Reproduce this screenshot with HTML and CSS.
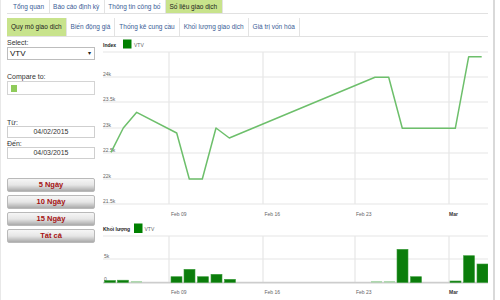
FILE: index.html
```html
<!DOCTYPE html>
<html lang="vi">
<head>
  <meta charset="UTF-8" />
  <title>Số liệu giao dịch - VTV</title>
  <meta name="viewport" content="width=device-width, initial-scale=1.0" />
  <link rel="stylesheet" href="styles.css">
</head>
<body>
  <div class="frame">
    <ul class="tabs tabs-top">
      <li>Tổng quan</li>
      <li>Báo cáo định kỳ</li>
      <li>Thông tin công bố</li>
      <li class="active">Số liệu giao dịch</li>
    </ul>
    <ul class="tabs tabs-sub">
      <li class="active">Quy mô giao dịch</li>
      <li>Biến động giá</li>
      <li>Thống kê cung cầu</li>
      <li>Khối lượng giao dịch</li>
      <li>Giá trị vốn hóa</li>
    </ul>

    <div class="content">
      <div class="filters">
        <label class="lbl-select">Select:</label>
        <div class="select">VTV<span class="caret">▾</span></div>

        <label class="lbl-compare">Compare to:</label>
        <div class="compare"><span class="swatch"></span></div>

        <label class="lbl-from">Từ:</label>
        <div class="date">04/02/2015</div>
        <label class="lbl-to">Đến:</label>
        <div class="date">04/03/2015</div>

        <div class="ranges">
          <button>5 Ngày</button>
          <button>10 Ngày</button>
          <button>15 Ngày</button>
          <button>Tất cả</button>
        </div>
      </div>

      <svg class="chart" width="388" height="262" viewBox="0 0 388 262">
        <g transform="translate(-100 -38)">
          <!-- price chart -->
          <text class="legend" x="103" y="47.5">Index</text>
          <rect x="123" y="40.5" width="8.5" height="9" fill="#008000" />
          <text class="tick" x="134" y="47.5">VTV</text>

          <g class="grid">
            <line x1="103" y1="53" x2="488" y2="53" />
            <line x1="103" y1="78" x2="488" y2="78" />
            <line x1="103" y1="103" x2="488" y2="103" />
            <line x1="103" y1="129" x2="488" y2="129" />
            <line x1="103" y1="154" x2="488" y2="154" />
            <line x1="103" y1="180" x2="488" y2="180" />
            <line x1="103" y1="205" x2="488" y2="205" />
            <line x1="169" y1="53" x2="169" y2="205" />
            <line x1="263" y1="53" x2="263" y2="205" />
            <line x1="355" y1="53" x2="355" y2="205" />
            <line x1="449" y1="53" x2="449" y2="205" />
          </g>

          <text class="tick" x="103" y="76.5">24k</text>
          <text class="tick" x="103" y="101.5">23.5k</text>
          <text class="tick" x="103" y="127.5">23k</text>
          <text class="tick" x="103" y="152.5">22.5k</text>
          <text class="tick" x="103" y="178.5">22k</text>
          <text class="tick" x="103" y="203.5">21.5k</text>

          <text class="tick" x="171" y="216.5">Feb 09</text>
          <text class="tick" x="264.5" y="216.5">Feb 16</text>
          <text class="tick" x="356" y="216.5">Feb 23</text>
          <text class="tick month" x="449" y="216.5">Mar</text>

          <polyline class="price" points="111,153.3 123.3,129 136.7,113.3 176.7,134 189.3,180 202.3,180 216,129 229.3,139 375,78.3 388.7,78.3 402.3,129.3 455.3,129.3 468.7,57.7 481.7,57.7" />

          <!-- volume chart -->
          <text class="legend" x="103" y="231.5">Khối lượng</text>
          <rect x="134" y="224.5" width="8.5" height="9.5" fill="#008000" />
          <text class="tick" x="144.5" y="231.5">VTV</text>

          <g class="grid">
            <line x1="103" y1="237" x2="488" y2="237" />
            <line x1="103" y1="260" x2="488" y2="260" />
            <line x1="169" y1="237" x2="169" y2="283" />
            <line x1="263" y1="237" x2="263" y2="283" />
            <line x1="355" y1="237" x2="355" y2="283" />
            <line x1="449" y1="237" x2="449" y2="283" />
          </g>
          <line class="axis" x1="103" y1="283.6" x2="488" y2="283.6" />

          <text class="tick" x="104" y="258.5">5k</text>
          <text class="tick" x="104" y="281.5">0</text>

          <g class="bars">
            <rect x="104.5" y="281.5" width="11" height="2" />
            <rect x="117.5" y="281.2" width="11" height="2.3" />
            <rect class="low" x="131" y="282.2" width="11" height="1.3" />
            <rect x="171" y="277.7" width="11" height="5.8" />
            <rect x="184" y="270.3" width="11" height="13.2" />
            <rect x="197.5" y="277.7" width="11" height="5.8" />
            <rect x="211" y="275.3" width="11" height="8.2" />
            <rect x="224.5" y="280.3" width="11" height="3.2" />
            <rect class="low" x="371" y="282.2" width="11" height="1.3" />
            <rect class="low" x="384" y="282.2" width="11" height="1.3" />
            <rect x="397" y="250.3" width="11" height="33.2" />
            <rect x="410.5" y="277.7" width="11" height="5.8" />
            <rect x="450" y="282" width="11" height="1.5" />
            <rect x="463.5" y="256.7" width="11" height="26.8" />
            <rect x="477" y="265" width="11" height="18.5" />
          </g>

          <text class="tick" x="171" y="295">Feb 09</text>
          <text class="tick" x="264.5" y="295">Feb 16</text>
          <text class="tick" x="356" y="295">Feb 23</text>
          <text class="tick month" x="449" y="295">Mar</text>
        </g>
      </svg>
    </div>
  </div>
</body>
</html>
```

FILE: styles.css
```css
body {
  margin: 0;
  font-family: "Liberation Sans", Arial, sans-serif;
  background: #ffffff;
}
.frame {
  width: 495px;
  height: 300px;
  box-sizing: border-box;
  border-left: 1px solid #e8e8e8;
  border-right: 2px solid #d9d9d9;
  padding: 0 5px 0 6px;
  overflow: hidden;
}
.tabs {
  list-style: none;
  margin: 0;
  padding: 0;
  display: flex;
}
.tabs li {
  color: #3a5c96;
  white-space: nowrap;
  border-right: 1px solid #e3e3e3;
}
.tabs-top {
  height: 13px;
  padding-left: 3px;
  border-bottom: 1.5px solid #e1e1e1;
}
.tabs-top li {
  font-size: 6.5px;
  line-height: 13px;
  padding: 0 5px 0 3px;
}
.tabs-sub {
  margin-top: 3.5px;
  height: 18.5px;
  border-bottom: 1.5px solid #e1e1e1;
}
.tabs-sub li {
  font-size: 6.5px;
  line-height: 18.5px;
  padding: 0 4px;
}
.tabs li.active {
  background: #c8e38c;
  color: #1b1b1b;
}

.content {
  display: flex;
  gap: 5px;
}
.filters {
  width: 88px;
  flex: none;
}
label {
  display: block;
  font-size: 7px;
  line-height: 7px;
  color: #333;
}
.lbl-select {
  margin-top: 2px;
}
.select {
  position: relative;
  margin-top: 0.5px;
  height: 11.5px;
  border: 1px solid #bdbdbd;
  font-size: 8px;
  line-height: 11.5px;
  padding-left: 2px;
  color: #111;
}
.caret {
  position: absolute;
  right: 3px;
  top: 0;
  font-size: 6px;
  color: #222;
}
.lbl-compare {
  margin-top: 13px;
}
.compare {
  margin-top: 1px;
  border: 1px solid #d4d4d4;
  padding: 3px 0 0 2.5px;
  height: 8.5px;
}
.swatch {
  display: block;
  width: 6.5px;
  height: 6.5px;
  background: #8fcb5a;
}
.lbl-from {
  margin-top: 24px;
}
.lbl-to {
  margin-top: 2px;
}
.date {
  height: 9.5px;
  border: 1px solid #cfcfcf;
  font-size: 7px;
  line-height: 9.5px;
  text-align: center;
  color: #333;
  margin-top: 0.5px;
}
.ranges {
  margin-top: 19px;
}
button {
  display: block;
  width: 100%;
  height: 14px;
  margin-top: 3px;
  padding: 0;
  border: 1px solid #b9b9b9;
  border-radius: 2px;
  background: linear-gradient(#f6f6f6 0%, #e6e6e6 50%, #aaaaaa 100%);
  color: #a51212;
  font-family: "Liberation Sans", Arial, sans-serif;
  font-weight: bold;
  font-size: 7.5px;
  line-height: 12px;
  cursor: pointer;
}

.chart {
  display: block;
  flex: none;
}
.grid line {
  stroke: #e6e6e6;
  stroke-width: 1.2;
}
.axis {
  stroke: #cdcdcd;
  stroke-width: 1.6;
}
.tick {
  font-size: 5px;
  fill: #666;
  font-family: "Liberation Sans", Arial, sans-serif;
}
.month {
  font-weight: bold;
  fill: #333;
}
.legend {
  font-size: 5px;
  font-weight: bold;
  fill: #222;
  font-family: "Liberation Sans", Arial, sans-serif;
}
.price {
  fill: none;
  stroke: #6dbf6b;
  stroke-width: 1.5;
  stroke-linejoin: round;
}
.bars rect {
  fill: #0b7d0b;
  stroke: #3c9d3c;
  stroke-width: 0.6;
}
.bars rect.low {
  fill: #9fd39f;
  stroke: none;
}
```
